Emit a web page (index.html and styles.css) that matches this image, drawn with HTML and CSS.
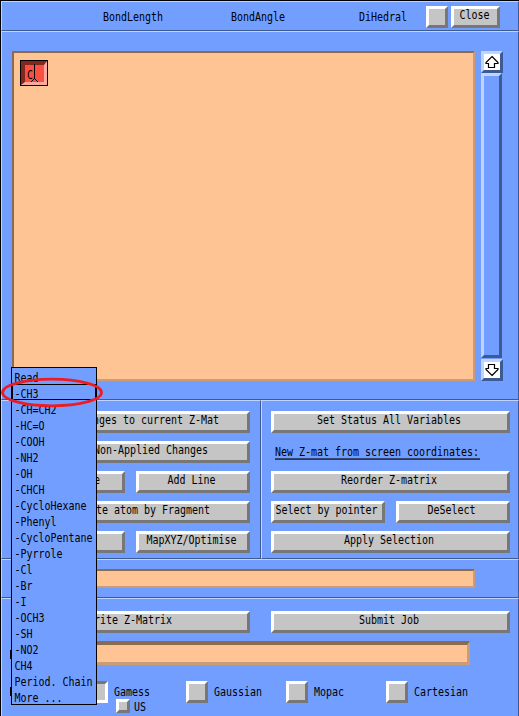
FILE: index.html
```html
<!DOCTYPE html>
<html lang="en">
<head>
<meta charset="utf-8">
<title>Z-Matrix Editor</title>
<link rel="stylesheet" href="styles.css">
</head>
<body>
<div class="window">
  <header class="panel header">
    <span class="t col">BondLength</span>
    <span class="t col">BondAngle</span>
    <span class="t col">DiHedral</span>
    <div class="check"></div>
    <button class="btn close"><span class="t">Close</span></button>
  </header>

  <main class="panel editor">
    <div class="canvas">
      <div class="atom"><span class="t">C</span>
        <svg class="caret" width="7" height="19" viewBox="0 0 7 19" shape-rendering="crispEdges"><path d="M3 0h1v15h1v1h1v1h1v1h-1v-1h-1v-1h-1v-1h-1v1h-1v1h-1v1h-1v-1h1v-1h1v-1h1z"/></svg>
      </div>
    </div>
    <div class="scroll">
      <div class="arrow"><svg width="16" height="16" viewBox="0 0 16 16"><path d="M8 2.500L14 8.500V9.500H10.500V13.500H4.500V9.500H2V8.500Z"/></svg></div>
      <div class="track"></div>
      <div class="arrow"><svg width="16" height="16" viewBox="0 0 16 16"><path d="M8 13.500L14 7.500V6.500H10.500V2.500H4.500V6.500H2V7.500Z"/></svg></div>
    </div>
  </main>

  <section class="actions">
    <div class="panel group left">
      <button class="btn clip p27"><span class="t">nges to current Z-Mat</span></button>
      <button class="btn clip p39"><span class="t">Non-Applied Changes</span></button>
      <div class="pair">
        <button class="btn clip p22"><span class="t">e</span></button>
        <button class="btn"><span class="t">Add Line</span></button>
      </div>
      <button class="btn clip p36"><span class="t">te atom by Fragment</span></button>
      <div class="pair">
        <button class="btn"></button>
        <button class="btn"><span class="t">MapXYZ/Optimise</span></button>
      </div>
    </div>
    <div class="panel group right">
      <button class="btn"><span class="t">Set Status All Variables</span></button>
      <div class="caption"><span class="t">New Z-mat from screen coordinates:</span></div>
      <button class="btn"><span class="t">Reorder Z-matrix</span></button>
      <div class="pair">
        <button class="btn"><span class="t">Select by pointer</span></button>
        <button class="btn"><span class="t">DeSelect</span></button>
      </div>
      <button class="btn"><span class="t">Apply Selection</span></button>
    </div>
  </section>

  <section class="panel message"><div class="field"></div></section>

  <footer class="panel output">
    <div class="jobs">
      <button class="btn clip p75"><span class="t">rite Z-Matrix</span></button>
      <button class="btn"><span class="t">Submit Job</span></button>
    </div>
    <div class="row"><i class="edge"></i><div class="field file"></div></div>
    <div class="formats">
      <i class="edge"></i>
      <div class="opt"><div class="check on"></div><span class="t">Gamess</span></div>
      <div class="opt"><div class="check"></div><span class="t">Gaussian</span></div>
      <div class="opt"><div class="check"></div><span class="t">Mopac</span></div>
      <div class="opt"><div class="check"></div><span class="t">Cartesian</span></div>
      <div class="sub"><div class="check small"></div><span class="t">US</span></div>
    </div>
  </footer>

  <ul class="menu">
    <li><span class="t">Read</span></li>
    <li class="current"><span class="t">-CH3</span></li>
    <li><span class="t">-CH=CH2</span></li>
    <li><span class="t">-HC=O</span></li>
    <li><span class="t">-COOH</span></li>
    <li><span class="t">-NH2</span></li>
    <li><span class="t">-OH</span></li>
    <li><span class="t">-CHCH</span></li>
    <li><span class="t">-CycloHexane</span></li>
    <li><span class="t">-Phenyl</span></li>
    <li><span class="t">-CycloPentane</span></li>
    <li><span class="t">-Pyrrole</span></li>
    <li><span class="t">-Cl</span></li>
    <li><span class="t">-Br</span></li>
    <li><span class="t">-I</span></li>
    <li><span class="t">-OCH3</span></li>
    <li><span class="t">-SH</span></li>
    <li><span class="t">-NO2</span></li>
    <li><span class="t">CH4</span></li>
    <li><span class="t">Period. Chain</span></li>
    <li><span class="t">More ...</span></li>
  </ul>
  <svg class="ring" width="104" height="32" viewBox="0 0 104 32"><ellipse cx="51" cy="16.500" rx="49.500" ry="13.300"/></svg>
</div>
</body>
</html>
```
FILE: styles.css
```css
* { box-sizing: border-box; }

body { margin: 0; background: #729fff; }

.window {
  position: relative;
  width: 519px;
  height: 716px;
  overflow: hidden;
  border: solid #000;
  border-width: 1px 0 0 1px;
  display: flex;
  flex-direction: column;
  background: #729fff;
}

/* Narrow terminal lettering, stretched upward from the baseline */
.t {
  display: block;
  font: 10px/13px "DejaVu Sans Mono", monospace;
  letter-spacing: -0.02px;
  white-space: pre;
  color: #000;
  transform: scaleY(1.22);
  transform-origin: 0 10px;
}

.panel {
  border: 1px solid;
  border-color: #c0d4ff #3c5a94 #3c5a94 #c0d4ff;
}

.btn, .check {
  display: block;
  height: 22px;
  margin: 0;
  padding: 0;
  border: 3px solid;
  border-color: #fff #777 #777 #fff;
  border-radius: 0;
  background: #c5c5c5;
}
.btn {
  display: flex;
  justify-content: center;
  align-items: flex-start;
  padding-right: 3px;
}
.check { width: 22px; flex: none; }
.check.on { border-color: #777 #fff #fff #777; }
.check.small { width: 14px; height: 14px; }

.clip { justify-content: flex-end; }
.p27 { padding-right: 28px; }
.p39 { padding-right: 39px; }
.p22 { padding-right: 22px; }
.p36 { padding-right: 37px; }
.p75 { padding-right: 75px; }

.header {
  height: 30px;
  display: flex;
  padding: 4px 18px 0 101px;
}
.col { width: 128px; margin-top: 5px; }
.col:nth-child(3) { width: 67px; }
.close { width: 49px; margin-left: 3px; padding-right: 2px; }

.editor {
  height: 369px;
  display: flex;
  gap: 6px;
  padding: 19px 0 0 10px;
}
.canvas {
  width: 463px;
  height: 330px;
  padding: 7px 6px;
  border: 2px solid;
  border-color: #8b6b50 #cc9c77 #cc9c77 #8b6b50;
  background: #ffc493;
}
.atom {
  position: relative;
  width: 26px;
  height: 24px;
  margin: 1px;
  padding-left: 2px;
  border: solid;
  border-width: 4px 3px 3px 4px;
  border-color: #80281f #ffa89f #ffa89f #80281f;
  outline: 1px solid #000;
  background: #fa5042;
}
.atom .t { margin-top: 4px; }
.caret { position: absolute; left: 6px; top: -1px; }

.scroll {
  width: 22px;
  height: 330px;
  display: flex;
  flex-direction: column;
}
.arrow, .track {
  border: 3px solid;
  border-color: #c0d4ff #3c5a94 #3c5a94 #c0d4ff;
}
.arrow { height: 22px; background: #fff; }
.arrow svg { display: block; fill: #fff; stroke: #000; stroke-width: 1.2; }
.track { width: 21px; flex: 1; margin-bottom: 1px; }

.actions { display: flex; height: 159px; }
.group {
  display: flex;
  flex-direction: column;
  gap: 8px;
  padding-top: 10px;
}
.left { width: 260px; padding-left: 14px; padding-right: 10px; }
.right { flex: 1; padding-left: 9px; padding-right: 8px; }
.pair { display: grid; grid-template-columns: 1fr 114px; gap: 11px; }
.left .pair { grid-template-columns: 109px 114px; }
.caption { height: 22px; padding: 5px 0 0 4px; }
.caption .t { width: 205px; height: 13px; border-bottom: 1px solid #000; }

.message { height: 39px; padding: 9px 0 0 10px; }
.field {
  width: 463px;
  height: 19px;
  border: 2px solid;
  border-color: #8b6b50 #cc9c77 #cc9c77 #8b6b50;
  background: #ffc493;
}

.output { flex: 1; padding-top: 12px; border-bottom: 0; }
.jobs {
  display: grid;
  grid-template-columns: 234px 239px;
  gap: 21px;
  padding-left: 14px;
}
.row { display: flex; padding: 8px 0 0 8px; }
.edge { display: block; width: 1px; height: 9px; margin-top: 9px; background: #000; }
.file { width: 397px; height: 24px; margin-left: 62px; border-width: 4px 3px 3px 4px; }
.formats {
  display: grid;
  grid-template-columns: 1px 75px repeat(4, 100px);
  padding: 16px 0 0 8px;
}
.formats .edge { margin-top: 6px; }
.opt { display: flex; gap: 6px; }
.opt:nth-child(2) { grid-column: 3; }
.opt .t { margin-top: 5px; }
.sub {
  grid-column: 3;
  display: flex;
  gap: 4px;
  margin: -4px 0 0 30px;
}
.sub .t { margin-top: 2px; }

.menu {
  position: absolute;
  left: 10px;
  top: 366px;
  width: 86px;
  height: 338px;
  margin: 0;
  padding: 0;
  list-style: none;
  border: 1px solid #000;
  background: #729fff;
}
.menu li { height: 16px; padding: 4px 0 0 2.500px; }
.menu .current {
  padding: 3px 0 0 1.500px;
  border: 1px solid #000;
}

.ring { position: absolute; left: 0; top: 375px; }
.ring ellipse { fill: none; stroke: #ed1c24; stroke-width: 2.800; }
```
